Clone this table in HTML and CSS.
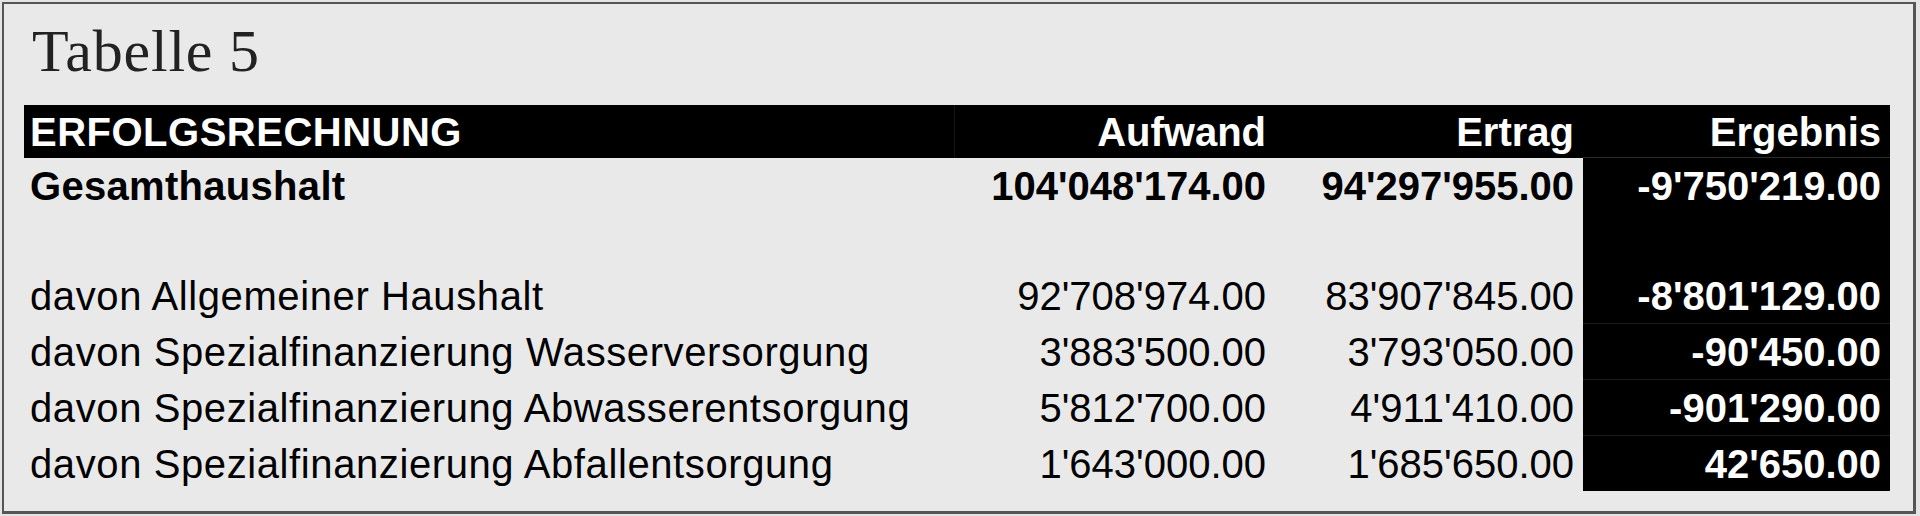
FILE: index.html
```html
<!DOCTYPE html>
<html lang="de">
<head>
<meta charset="utf-8">
<title>Tabelle 5</title>
<link rel="stylesheet" href="styles.css">
</head>
<body>
<div class="frame">
  <h1 class="title">Tabelle 5</h1>
  <table class="er">
    <colgroup>
      <col class="c-label">
      <col class="c-aufwand">
      <col class="c-ertrag">
      <col class="c-ergebnis">
    </colgroup>
    <thead>
      <tr class="head">
        <th class="label sep">ERFOLGSRECHNUNG</th>
        <th class="num">Aufwand</th>
        <th class="num">Ertrag</th>
        <th class="num res">Ergebnis</th>
      </tr>
    </thead>
    <tbody>
      <tr class="total">
        <td class="label">Gesamthaushalt</td>
        <td class="num">104'048'174.00</td>
        <td class="num">94'297'955.00</td>
        <td class="num res">-9'750'219.00</td>
      </tr>
      <tr class="blank">
        <td class="label"></td>
        <td class="num"></td>
        <td class="num"></td>
        <td class="num res"></td>
      </tr>
      <tr class="sub">
        <td class="label">davon Allgemeiner Haushalt</td>
        <td class="num">92'708'974.00</td>
        <td class="num">83'907'845.00</td>
        <td class="num res">-8'801'129.00</td>
      </tr>
      <tr class="sub">
        <td class="label">davon Spezialfinanzierung Wasserversorgung</td>
        <td class="num">3'883'500.00</td>
        <td class="num">3'793'050.00</td>
        <td class="num res line">-90'450.00</td>
      </tr>
      <tr class="sub">
        <td class="label">davon Spezialfinanzierung Abwasserentsorgung</td>
        <td class="num">5'812'700.00</td>
        <td class="num">4'911'410.00</td>
        <td class="num res line">-901'290.00</td>
      </tr>
      <tr class="sub">
        <td class="label">davon Spezialfinanzierung Abfallentsorgung</td>
        <td class="num">1'643'000.00</td>
        <td class="num">1'685'650.00</td>
        <td class="num res line">42'650.00</td>
      </tr>
    </tbody>
  </table>
</div>
</body>
</html>
```

FILE: styles.css
```css
html, body {
  margin: 0;
  padding: 0;
  background: #e4e4e4;
}

.frame {
  box-sizing: border-box;
  height: 512px;
  margin: 2px 4px 2px 2px;
  border: 2px solid #555;
  border-right-width: 3px;
  border-bottom-width: 3px;
  background: #e9e9e9;
  padding: 19px 23px 0 20px;
}

.title {
  margin: 0 0 25px 8px;
  font-family: "Liberation Serif", "Times New Roman", serif;
  font-weight: normal;
  font-size: 60px;
  line-height: 57px;
  height: 57px;
  color: #222;
  letter-spacing: 0.8px;
}

.er {
  border-collapse: collapse;
  border-spacing: 0;
  table-layout: fixed;
  width: 1866px;
  font-family: "Liberation Sans", Arial, Helvetica, sans-serif;
  font-size: 40px;
  color: #000;
}

.c-label { width: 930px; }
.c-aufwand { width: 321px; }
.c-ertrag { width: 308px; }
.c-ergebnis { width: 307px; }

.er th,
.er td {
  padding: 2px 9px 0 6px;
  white-space: nowrap;
  overflow: hidden;
}

.er th {
  height: 50px;
  line-height: 50px;
  background: #000;
  color: #fff;
  font-weight: bold;
}

.er td {
  height: 53px;
  line-height: 53px;
}

.label { text-align: left; }
.num { text-align: right; }

.head .label { letter-spacing: 0.5px; }
.total .label { letter-spacing: 0.3px; }
.sub .label { letter-spacing: 0.6px; }

.head .sep { border-right: 1px solid #141414; }
.head .res { border-bottom: 1px solid #2c2c2c; }

.total td { font-weight: bold; }

.res {
  background: #000;
  color: #fff;
  font-weight: bold;
}

.er td.line { border-top: 1px solid #1c1c1c; }
```
